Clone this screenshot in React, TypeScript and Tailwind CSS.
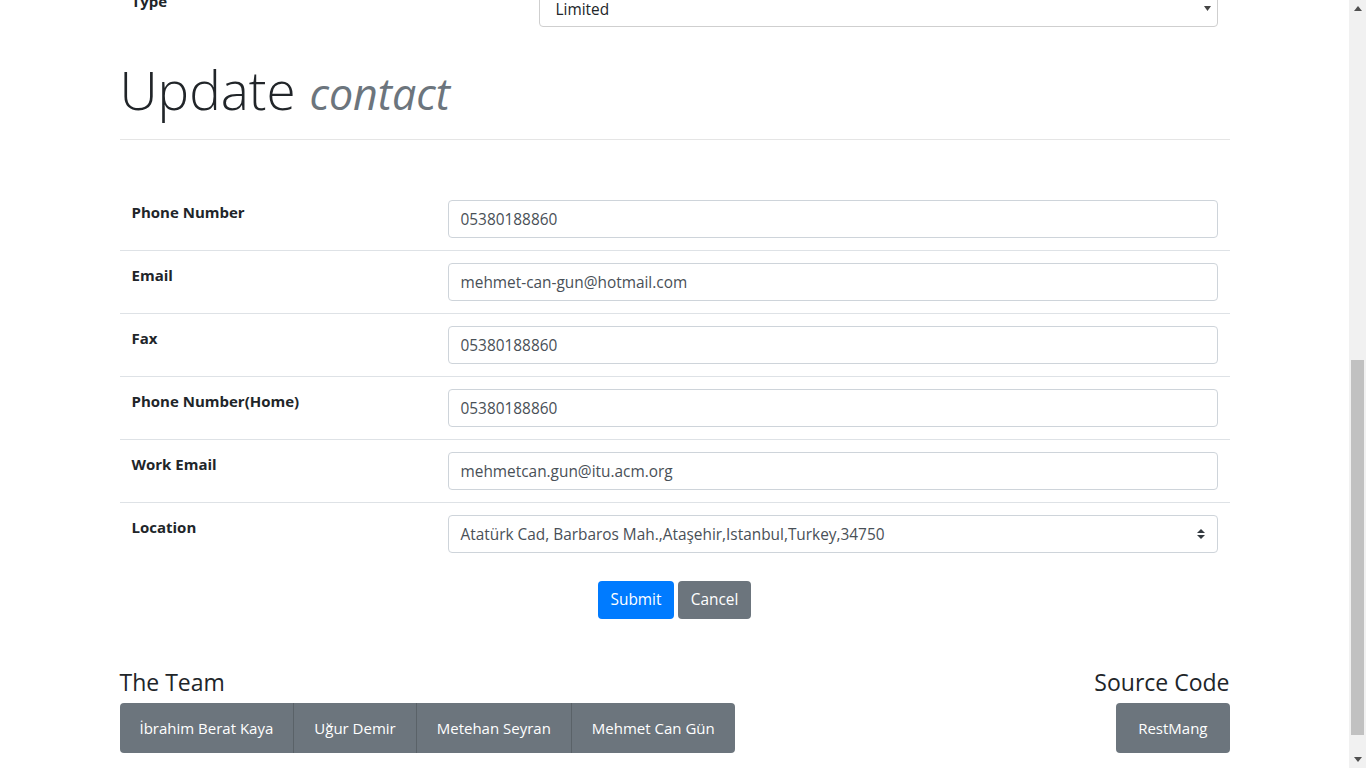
import React from "react";

const font = { fontFamily: '"Open Sans", "Noto Sans", Arial, sans-serif' };

function UpDown() {
  return (
    <svg width="8" height="10" viewBox="0 0 8 10" className="fill-[#343a40]">
      <path d="M4 0 L8 4 L0 4 Z" />
      <path d="M4 10 L8 6 L0 6 Z" />
    </svg>
  );
}

function Row({ label, value, first, select }: { label: string; value: string; first?: boolean; select?: boolean }) {
  return (
    <div className={`flex ${first ? "" : "border-t border-[#dee2e6]"}`}>
      <div className="w-[316px] shrink-0 p-3 text-[15px] leading-6 font-bold text-[#212529]">{label}</div>
      <div className="flex-1 p-3">
        <div className="flex h-[38px] items-center justify-between rounded border border-[#ced4da] bg-white pl-3 pr-3 text-[15.4px] text-[#495057]">
          <span className="pt-[2px]">{value}</span>
          {select && <UpDown />}
        </div>
      </div>
    </div>
  );
}

function Scrollbar() {
  return (
    <div className="flex h-screen w-[17px] shrink-0 flex-col bg-[#f1f1f1]">
      <div className="flex h-[17px] items-center justify-center">
        <svg width="8" height="5" viewBox="0 0 8 5" className="fill-[#505050]"><path d="M4 0 L8 5 L0 5 Z" /></svg>
      </div>
      <div className="flex-1 px-[2px]">
        <div className="mt-[343px] h-[375px] bg-[#c1c1c1]" />
      </div>
      <div className="flex h-[17px] items-center justify-center">
        <svg width="8" height="5" viewBox="0 0 8 5" className="fill-[#505050]"><path d="M4 5 L8 0 L0 0 Z" /></svg>
      </div>
    </div>
  );
}

export default function App() {
  return (
    <div className="flex h-screen w-full overflow-hidden bg-white text-[#212529]" style={font}>
      <div className="h-screen flex-1 overflow-hidden">
        <div className="mx-auto w-[1140px] px-[15px]">
          {/* previous table, last row clipped */}
          <div className="-mt-[23px] flex">
            <div className="w-[407px] shrink-0 p-3 text-[15px] leading-6 font-bold">Type</div>
            <div className="flex-1 p-3">
              <div className="flex h-[38px] items-center justify-between rounded border border-[#cfcfcf] bg-white pl-[16px] pr-[6px] text-[15.4px] text-[#212529]">
                <span className="pt-[3px]">Limited</span>
                <svg width="7" height="5" viewBox="0 0 7 5" className="fill-[#444]"><path d="M0 0 L7 0 L3.5 5 Z" /></svg>
              </div>
            </div>
          </div>

          <h1 className="mt-[17px] h-[67px] text-[53px] leading-[67px] font-light text-[#212529]">
            Update <small className="text-[43px] leading-none italic font-normal text-[#6c757d]">contact</small>
          </h1>
          <hr className="mt-4 border-t border-[#e5e5e5]" />

          <div className="mt-[48px]">
            <Row first label="Phone Number" value="05380188860" />
            <Row label="Email" value="mehmet-can-gun@hotmail.com" />
            <Row label="Fax" value="05380188860" />
            <Row label="Phone Number(Home)" value="05380188860" />
            <Row label="Work Email" value="mehmetcan.gun@itu.acm.org" />
            <Row label="Location" value="Atatürk Cad, Barbaros Mah.,Ataşehir,Istanbul,Turkey,34750" select />
          </div>

          <div className="mt-4 flex justify-center gap-1">
            <button className="h-[38px] w-[76px] rounded bg-[#007bff] text-[15.4px] text-white">Submit</button>
            <button className="h-[38px] w-[73px] rounded bg-[#6c757d] text-[15.4px] text-white">Cancel</button>
          </div>

          <div className="mt-[49px] flex justify-between">
            <div>
              <h4 className="mb-[6px] text-[23px] leading-[29px] font-medium">The Team</h4>
              <div className="flex overflow-hidden rounded bg-[#6c757d] text-[15px] text-white">
                {["İbrahim Berat Kaya", "Uğur Demir", "Metehan Seyran", "Mehmet Can Gün"].map((n, i) => (
                  <div key={n} className={`flex h-[50px] items-center px-5 ${i ? "border-l border-[#5a6268]" : ""}`}>{n}</div>
                ))}
              </div>
            </div>
            <div className="flex flex-col items-end">
              <h4 className="mb-[6px] text-[23px] leading-[29px] font-medium">Source Code</h4>
              <div className="flex h-[50px] items-center rounded bg-[#6c757d] px-[22px] text-[15px] text-white">RestMang</div>
            </div>
          </div>
        </div>
      </div>
      <Scrollbar />
    </div>
  );
}
